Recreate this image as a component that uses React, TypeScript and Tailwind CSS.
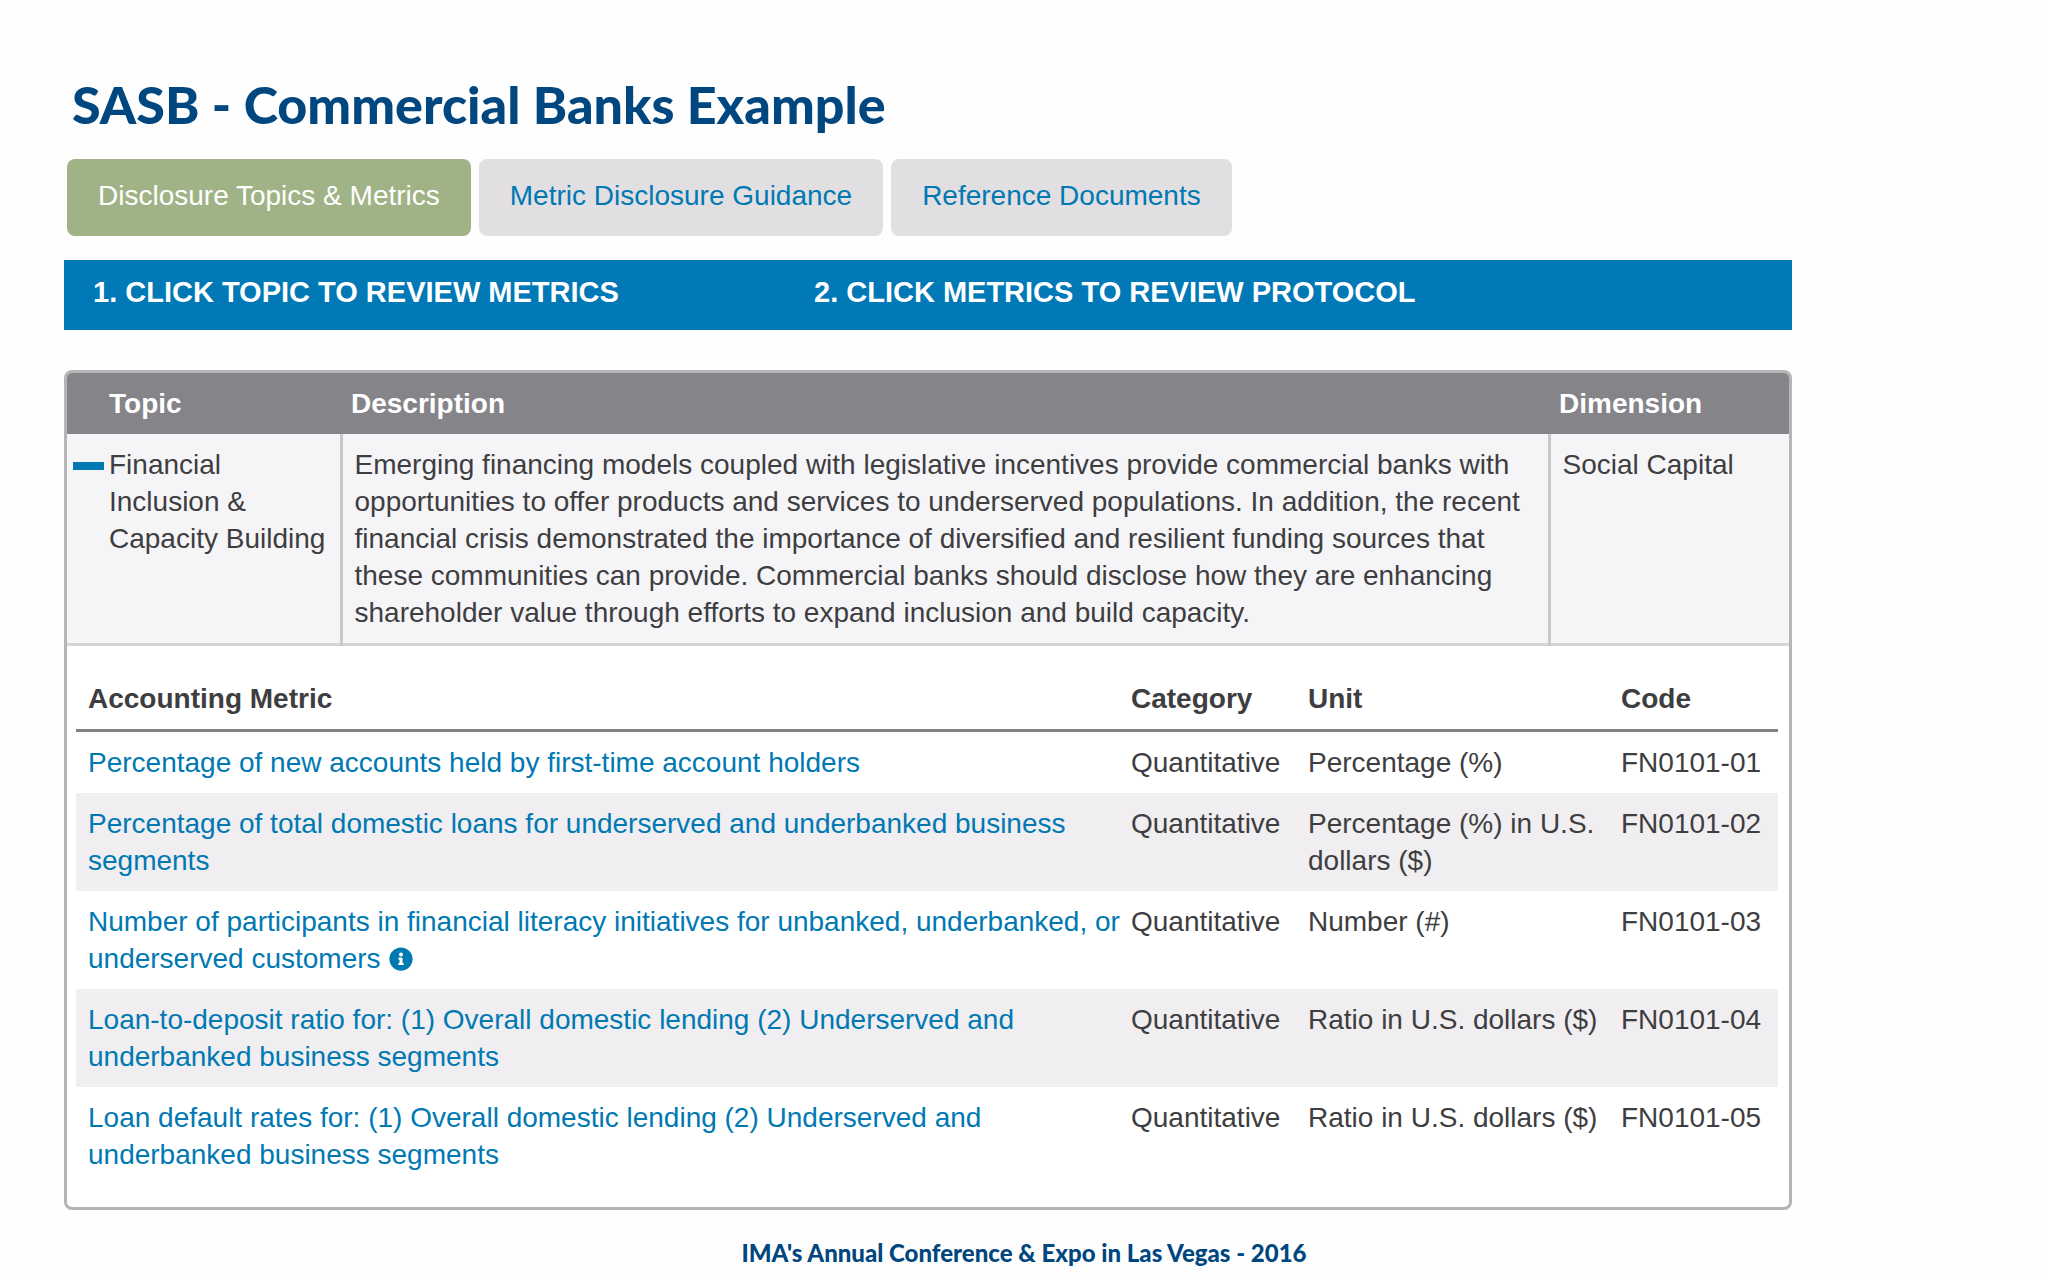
import { useState } from "react";
import { FaInfoCircle } from "react-icons/fa";

interface Metric {
   code: string;
   title: string;
   unit: string;
   info?: boolean;
}

const tabs = [
   { id: 0, title: "Disclosure Topics & Metrics" },
   { id: 1, title: "Metric Disclosure Guidance" },
   { id: 2, title: "Reference Documents" },
];

const metrics: Metric[] = [
   {
      code: "FN0101-01",
      title: "Percentage of new accounts held by first-time account holders",
      unit: "Percentage (%)",
   },
   {
      code: "FN0101-02",
      title: "Percentage of total domestic loans for underserved and underbanked business segments",
      unit: "Percentage (%) in U.S. dollars ($)",
   },
   {
      code: "FN0101-03",
      title: "Number of participants in financial literacy initiatives for unbanked, underbanked, or underserved customers",
      unit: "Number (#)",
      info: true,
   },
   {
      code: "FN0101-04",
      title: "Loan-to-deposit ratio for: (1) Overall domestic lending (2) Underserved and underbanked business segments",
      unit: "Ratio in U.S. dollars ($)",
   },
   {
      code: "FN0101-05",
      title: "Loan default rates for: (1) Overall domestic lending (2) Underserved and underbanked business segments",
      unit: "Ratio in U.S. dollars ($)",
   },
];

const Tabs: React.FC = () => {
   const [active, setActive] = useState(tabs[0].id);

   return (
      <div className="flex gap-2 px-[3px]">
         {tabs.map((tab) => (
            <button
               key={tab.id}
               onClick={() => setActive(tab.id)}
               className={`${active === tab.id
                  ? "bg-[#9fb386] text-white"
                  : "bg-[#e1dfe2] text-[#0079b3]"
                  } rounded-lg px-[31px] pt-[18px] pb-[22px] text-[28px] leading-[37px] whitespace-nowrap`}
            >
               {tab.title}
            </button>
         ))}
      </div>
   );
};

const MetricsTable: React.FC = () => (
   <table className="w-full table-fixed text-left">
      <colgroup>
         <col />
         <col className="w-[181px]" />
         <col className="w-[313px]" />
         <col className="w-[157px]" />
      </colgroup>
      <thead>
         <tr className="border-b-3 border-[#828184]">
            <th className="pt-[34px] pb-3 pl-3">Accounting Metric</th>
            <th className="pt-[34px] pb-3 pl-1">Category</th>
            <th className="pt-[34px] pb-3">Unit</th>
            <th className="pt-[34px] pb-3">Code</th>
         </tr>
      </thead>
      <tbody>
         {metrics.map((m) => (
            <tr key={m.code} className="align-top even:bg-[#f0eef0]">
               <td className="py-3 pl-3">
                  <a href={`#${m.code}`} className="text-[#0079b3]">
                     {m.title}
                     {m.info ? (
                        <FaInfoCircle size={24} className="ml-2 inline align-[-3px]" />
                     ) : null}
                  </a>
               </td>
               <td className="py-3 pl-1">Quantitative</td>
               <td className="py-3 pr-4">{m.unit}</td>
               <td className="py-3">{m.code}</td>
            </tr>
         ))}
      </tbody>
   </table>
);

const App: React.FC = () => {
   const [open, setOpen] = useState(true);

   return (
      <div className="min-h-screen bg-[#fefefe] pt-[74px] font-['Liberation_Sans',Arial,sans-serif] text-[28px] leading-[37px] text-[#3e3d40]">
         <main className="mr-64 ml-16">
            <h1 className="mb-[25px] pl-2 font-[Lato,sans-serif] text-[52px] leading-[60px] font-black text-[#00467f]">
               SASB - Commercial Banks Example
            </h1>

            <Tabs />

            <div className="mt-6 flex bg-[#0079b6] px-[29px] pt-[14px] pb-[19px] text-[29px] font-bold text-white">
               <p className="w-[721px]">1. CLICK TOPIC TO REVIEW METRICS</p>
               <p>2. CLICK METRICS TO REVIEW PROTOCOL</p>
            </div>

            <section className="mt-10 overflow-hidden rounded-lg border-3 border-[#b5b4b6] bg-white">
               <table className="w-full table-fixed text-left">
                  <colgroup>
                     <col className="w-[274px]" />
                     <col />
                     <col className="w-[240px]" />
                  </colgroup>
                  <thead>
                     <tr className="bg-[#858489] text-white">
                        <th className="py-3 pl-[42px]">Topic</th>
                        <th className="py-3 pl-[10px]">Description</th>
                        <th className="py-3 pl-[10px]">Dimension</th>
                     </tr>
                  </thead>
                  <tbody>
                     <tr className="border-b-3 border-[#d5d5d8] bg-[#f5f5f8] align-top">
                        <td className="py-3 pr-3">
                           <div className="flex">
                              <button
                                 aria-label="Toggle metrics"
                                 onClick={() => setOpen(!open)}
                                 className="mt-4 mr-[5px] ml-[6px] h-2 w-[31px] shrink-0 bg-[#0079b3]"
                              />
                              <span>Financial Inclusion &amp; Capacity Building</span>
                           </div>
                        </td>
                        <td className="border-l-3 border-[#c9c9cc] py-3 pl-3">
                           Emerging financing models coupled with legislative
                           incentives provide commercial banks with
                           opportunities to offer products and services to
                           underserved populations. In addition, the recent
                           financial crisis demonstrated the importance of
                           diversified and resilient funding sources that these
                           communities can provide. Commercial banks should
                           disclose how they are enhancing shareholder value
                           through efforts to expand inclusion and build
                           capacity.
                        </td>
                        <td className="border-l-3 border-[#c9c9cc] py-3 pl-3">
                           Social Capital
                        </td>
                     </tr>
                  </tbody>
               </table>

               {open ? (
                  <div className="pr-[11px] pb-[22px] pl-[9px]">
                     <MetricsTable />
                  </div>
               ) : null}
            </section>
         </main>

         <footer className="mt-6 text-center font-[Lato,sans-serif] text-[24px] font-black text-[#00467f]">
            IMA's Annual Conference &amp; Expo in Las Vegas - 2016
         </footer>
      </div>
   );
};

export default App;
